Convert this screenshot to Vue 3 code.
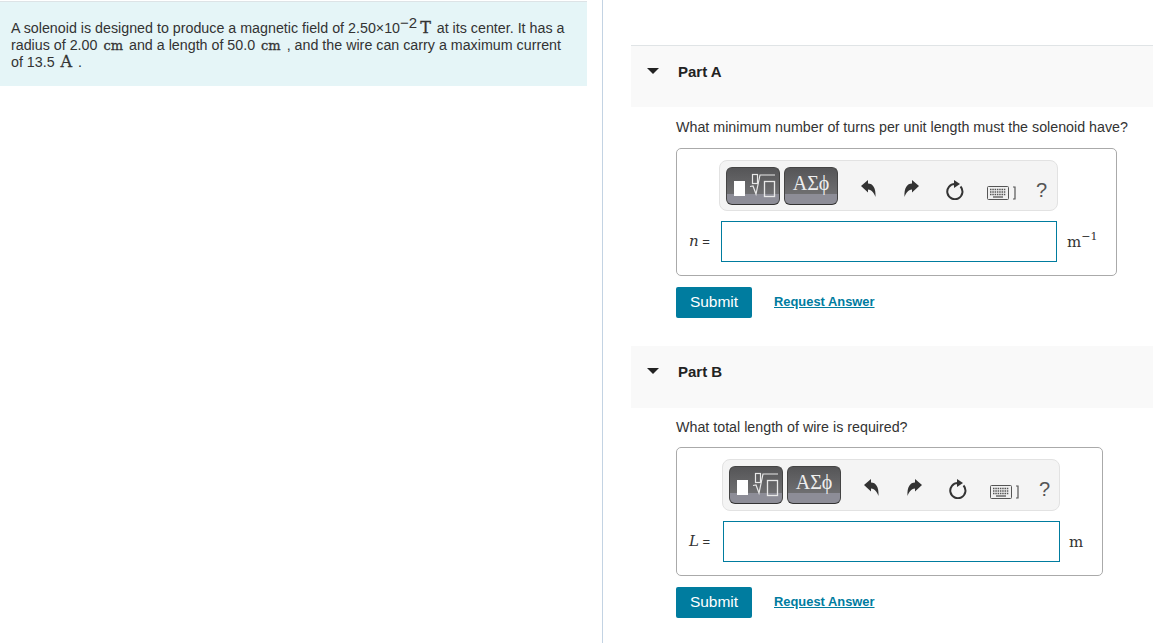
<script setup>
const parts = [
  { id: 'A', question: 'What minimum number of turns per unit length must the solenoid have?', variable: 'n', unit: 'm', exp: '−1' },
  { id: 'B', question: 'What total length of wire is required?', variable: 'L', unit: 'm', exp: '' }
]
</script>

<template>
  <div class="page">
    <aside class="left">
      <div class="intro">
        <p>
          A solenoid is designed to produce a magnetic field of 2.50×10<sup class="pow">−2</sup>
          <span class="math big">T</span> at its center. It has a radius of 2.00 <span class="math">cm</span> and a length of
          50.0 <span class="math">cm</span> , and the wire can carry a maximum current of 13.5 <span class="math big">A</span> .
        </p>
      </div>
    </aside>

    <main class="right">
      <section v-for="part in parts" :key="part.id" class="part" :class="'part-' + part.id">
        <header class="part-head">
          <span class="caret"></span>
          <span class="part-title">Part {{ part.id }}</span>
        </header>
        <div class="part-body">
          <p class="question">{{ part.question }}</p>
          <div class="answer">
            <div class="toolbar">
              <button class="tool tool-tpl">
                <svg width="52" height="36" viewBox="0 0 52 36">
                  <rect x="7" y="13" width="11" height="15" fill="#fff" />
                  <rect x="25.500" y="6.500" width="5" height="9" fill="none" stroke="#e8e8e8" stroke-width="1.200" />
                  <path d="M23 18.500l3-.5 3 8 4-19h15" fill="none" stroke="#e8e8e8" stroke-width="1.200" />
                  <rect x="37.500" y="13.500" width="10" height="15" fill="none" stroke="#e8e8e8" stroke-width="1.300" />
                </svg>
              </button>
              <button class="tool tool-sym">ΑΣϕ</button>
              <div class="actions">
                <svg class="undo" width="15" height="17" viewBox="0 0 15 17">
                  <path d="M0 6 7 0v3.500c5 0 8 4.500 7.500 13.500C13 13 11 10 7 9.500v3z" fill="#333" />
                </svg>
                <svg class="redo" width="15" height="17" viewBox="0 0 15 17">
                  <path d="M15 6 8 0v3.500C3 3.500 0 8 .5 17 2 13 4 10 8 9.500v3z" fill="#333" />
                </svg>
                <svg class="reset" width="18" height="20" viewBox="0 0 18 20">
                  <path d="M9 4A7.600 7.600 0 1 0 14.500 6.500" fill="none" stroke="#333" stroke-width="2" />
                  <path d="M8 0l6 4-6 4z" fill="#333" />
                </svg>
                <svg class="keys" width="29" height="14" viewBox="0 0 29 14">
                  <rect x=".5" y=".5" width="21" height="13" rx="1" fill="#f0f0f0" stroke="#555" />
                  <path d="M3 3.500h16M3 6h16M3 8.500h16" stroke="#555" stroke-width="1.300" stroke-dasharray="1.500 .8" />
                  <path d="M6 11h10" stroke="#555" stroke-width="1.300" />
                  <path d="M26 1h2v12h-2" fill="none" stroke="#555" stroke-width="1.200" />
                </svg>
                <span class="help">?</span>
              </div>
            </div>
            <div class="row">
              <label class="var"><i>{{ part.variable }}</i> =</label>
              <input class="field" type="text" />
              <span class="unit">{{ part.unit }}<sup v-if="part.exp">{{ part.exp }}</sup></span>
            </div>
          </div>
          <div class="submit-row">
            <button class="submit">Submit</button>
            <a class="request" href="#" @click.prevent>Request Answer</a>
          </div>
        </div>
      </section>
    </main>
  </div>
</template>

<style scoped>
.page {
  display: flex;
  height: 100vh;
  overflow: hidden;
  background: #fff;
  color: #333;
  font-family: "Liberation Sans", Arial, sans-serif;
  font-size: 14.28px;
}

.left {
  width: 603px;
  flex: none;
  box-sizing: border-box;
  border-right: 1px solid #c3d3e3;
  padding: 1px 15px 0 0;
}

.intro {
  height: 85px;
  box-sizing: border-box;
  border-top: 1px solid #dde3e6;
  background: #e5f5f7;
  padding: 18px 20px 0 11px;
}

.intro p {
  margin: 0;
  line-height: 17px;
}

.pow {
  margin-right: 1px;
  font-size: 15px;
  line-height: 0;
  vertical-align: 5px;
}

.math {
  margin: 0 2px;
  font-family: "DejaVu Serif", serif;
  font-size: 13px;
  color: #333;
  -webkit-text-stroke: 0.3px #333;
}

.big {
  font-size: 16px;
  line-height: 0;
}

.right {
  flex: 1;
  min-width: 0;
  padding: 45px 0 0 28px;
}

.part-head {
  display: flex;
  align-items: center;
  height: 62px;
  box-sizing: border-box;
  padding-bottom: 12px;
  background: #f9f9f9;
}

.part-A .part-head {
  border-top: 1px solid #e0e4e6;
  padding-bottom: 11px;
}

.caret {
  width: 0;
  height: 0;
  margin-left: 16px;
  border-left: 6px solid transparent;
  border-right: 6px solid transparent;
  border-top: 6px solid #222;
}

.part-title {
  margin-left: 19px;
  font-size: 15px;
  font-weight: bold;
  color: #222;
}

.part-body {
  padding: 12px 0 28px 45px;
}

.part-B .part-body {
  padding-top: 11px;
  padding-bottom: 0;
}

.question {
  margin: 0 0 12px;
  line-height: 17px;
}

.part-B .question {
  margin-bottom: 11px;
}

.answer {
  box-sizing: border-box;
  width: 441px;
  height: 128px;
  padding: 11px 0 0 12px;
  border: 1px solid #aaa;
  border-radius: 5px;
}

.part-B .answer {
  width: 427px;
  height: 129px;
}

.toolbar {
  display: flex;
  align-items: center;
  box-sizing: border-box;
  width: 339px;
  height: 51px;
  margin-left: 30px;
  padding-left: 6px;
  background: #f4f4f4;
  border: 1px solid #e2e2e2;
  border-radius: 8px;
}

.part-B .toolbar {
  width: 338px;
  height: 52px;
  margin-left: 33px;
}

.tool {
  display: block;
  box-sizing: border-box;
  width: 54px;
  height: 38px;
  padding: 0;
  border: 1px solid #444;
  border-bottom-color: #333;
  border-radius: 6px;
  background: linear-gradient(#555557 0, #6e6e70 71%, #8d8d97 71%, #8d8d97 100%);
  color: #eee;
  font-family: "Liberation Serif", serif;
  font-size: 20px;
}

.tool-tpl svg {
  display: block;
}

.tool-sym {
  margin-left: 4px;
  padding-bottom: 5px;
}

.actions {
  position: relative;
  flex: 1;
  height: 100%;
}

.actions > * {
  position: absolute;
}

.undo {
  left: 23px;
  top: 19px;
}

.redo {
  left: 66px;
  top: 19px;
}

.reset {
  left: 108px;
  top: 19px;
}

.keys {
  left: 149px;
  top: 25px;
}

.help {
  left: 198px;
  top: 18px;
  font-size: 20px;
  line-height: 22px;
  color: #555;
}

.row {
  display: flex;
  align-items: center;
  margin-top: 10px;
}

.var {
  width: 32px;
  flex: none;
  margin-top: -2px;
  font-family: "Liberation Sans", sans-serif;
  font-size: 13px;
  color: #333;
}

.var i {
  font-family: "DejaVu Serif", serif;
  font-size: 15px;
}

.part-B .var {
  width: 34px;
}

.field {
  display: block;
  box-sizing: border-box;
  width: 336px;
  height: 41px;
  margin: 0;
  border: 1px solid #007c9f;
  background: #fff;
  outline: none;
}

.part-B .field {
  width: 337px;
}

.unit {
  margin-left: 10px;
  font-family: "DejaVu Serif", serif;
  font-size: 15px;
  color: #333;
}

.unit sup {
  font-size: 11px;
  line-height: 0;
  vertical-align: 7px;
}

.part-B .unit {
  margin-left: 9px;
}

.submit-row {
  display: flex;
  align-items: center;
  margin-top: 11px;
}

.submit {
  width: 76px;
  height: 31px;
  padding: 0 0 2px;
  border: none;
  border-radius: 2px;
  background: #007c9f;
  color: #fff;
  font-family: "Liberation Sans", Arial, sans-serif;
  font-size: 15.5px;
}

.request {
  margin: -2px 0 0 22px;
  color: #007c9f;
  font-size: 12.9px;
  font-weight: bold;
  text-decoration: underline;
}
</style>
